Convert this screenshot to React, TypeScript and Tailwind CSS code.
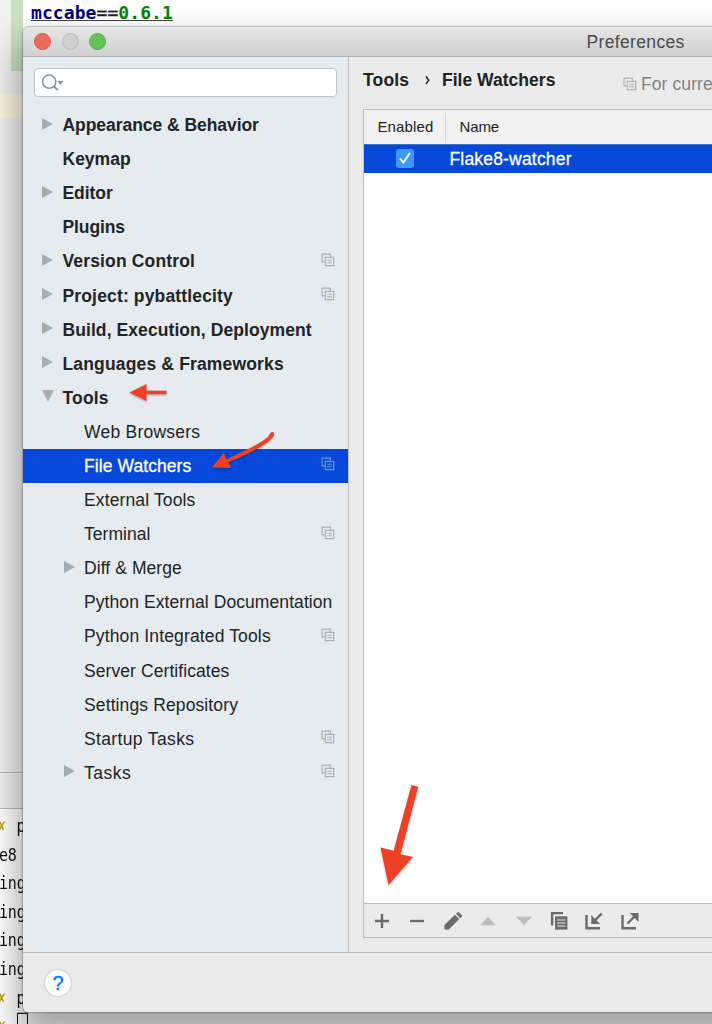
import React from "react";

type Item = {
  label: string;
  level: 0 | 1;
  arrow?: "right" | "down";
  copy?: boolean;
  selected?: boolean;
  tracking: string;
};

const items: Item[] = [
  { label: "Appearance & Behavior", level: 0, arrow: "right", tracking: "tracking-[-0.05px]" },
  { label: "Keymap", level: 0, tracking: "tracking-[0px]" },
  { label: "Editor", level: 0, arrow: "right", tracking: "tracking-[-0.05px]" },
  { label: "Plugins", level: 0, tracking: "tracking-[-0.1px]" },
  { label: "Version Control", level: 0, arrow: "right", copy: true, tracking: "tracking-[0.15px]" },
  { label: "Project: pybattlecity", level: 0, arrow: "right", copy: true, tracking: "tracking-[0.15px]" },
  { label: "Build, Execution, Deployment", level: 0, arrow: "right", tracking: "tracking-[0.08px]" },
  { label: "Languages & Frameworks", level: 0, arrow: "right", tracking: "tracking-[0.16px]" },
  { label: "Tools", level: 0, arrow: "down", tracking: "tracking-[0.15px]" },
  { label: "Web Browsers", level: 1, tracking: "tracking-[0.24px]" },
  { label: "File Watchers", level: 1, copy: true, selected: true, tracking: "tracking-[0.08px]" },
  { label: "External Tools", level: 1, tracking: "tracking-[0.13px]" },
  { label: "Terminal", level: 1, copy: true, tracking: "tracking-[0.05px]" },
  { label: "Diff & Merge", level: 1, arrow: "right", tracking: "tracking-[0.08px]" },
  { label: "Python External Documentation", level: 1, tracking: "tracking-[0.08px]" },
  { label: "Python Integrated Tools", level: 1, copy: true, tracking: "tracking-[0.14px]" },
  { label: "Server Certificates", level: 1, tracking: "tracking-[0.08px]" },
  { label: "Settings Repository", level: 1, tracking: "tracking-[0.12px]" },
  { label: "Startup Tasks", level: 1, copy: true, tracking: "tracking-[0.36px]" },
  { label: "Tasks", level: 1, arrow: "right", copy: true, tracking: "tracking-[0.5px]" },
];

function CopyIcon({ className }: { className: string }) {
  return (
    <svg width="14" height="14" viewBox="0 0 14 14" fill="none" stroke="currentColor" strokeWidth="1.2" className={className}>
      <path d="M3.8 8.900H1.100V1.100H9.400V3.700" />
      <path d="M4.300 4.300h8.400v8.400H4.300z" />
      <path d="M6.300 7.200h4.600M6.300 9.800h4.600" strokeWidth="1.1" />
    </svg>
  );
}

function Disclosure({ dir }: { dir?: "right" | "down" }) {
  return (
    <svg width="14" height="14" viewBox="0 0 14 14" fill="#a9abac" className="-mt-[3px] shrink-0">
      {dir === "right" && <path d="M1 1l11 6-11 6z" />}
      {dir === "down" && <path d="M1 1h12l-6 11.5z" />}
    </svg>
  );
}

function TreeRow({ item }: { item: Item }) {
  return (
    <div
      className={
        "flex h-[34.1px] shrink-0 items-center pr-[13px] " +
        (item.level === 0 ? "pl-[18px] font-bold " : "pl-[40px] ") +
        (item.selected ? "bg-[#0649da] text-white" : "text-[#222426]")
      }
    >
      <Disclosure dir={item.arrow} />
      <span
        className={
          "flex-1 whitespace-nowrap pt-px text-[17.5px] leading-[33px] " +
          (item.level === 0 ? "pl-[7.5px] " : "pl-[7px] ") +
          (item.selected ? "[-webkit-text-stroke:0.3px_white] " : "") +
          item.tracking
        }
      >
        {item.label}
      </span>
      {item.copy && (
        <CopyIcon className={"-mt-[3px] shrink-0 " + (item.selected ? "text-[#6f93cd]" : "text-[#a6b0ba]")} />
      )}
    </div>
  );
}

function Backdrop() {
  return (
    <div className="flex h-full w-full flex-col bg-white">
      <div className="flex h-[772px] shrink-0">
        <div className="w-[11px] shrink-0 bg-[#f1f1f1]">
          <div className="mt-[94px] h-[23px] bg-[#fdf6e0]" />
        </div>
        <div className="w-[12px] shrink-0 bg-[#f1f1f1]">
          <div className="h-[71px] bg-[#c9e2c0]" />
          <div className="mt-[23px] h-[23px] bg-[#fdf6e0]" />
        </div>
        <div className="h-[26px] whitespace-pre pl-[8px] font-['DejaVu_Sans_Mono',monospace] text-[18px] font-bold leading-[25px]">
          <span className="inline-block h-[21px] border-b border-[#444] tracking-[0.08px]">
            <span className="text-[#000080]">mccabe</span>
            <span className="font-normal text-[#222] [-webkit-text-stroke:0.3px_#222]">==</span>
            <span className="text-[#048404]">0.6.1</span>
          </span>
        </div>
      </div>
      <div className="h-[37px] shrink-0 border-y border-[#bcbcbc] bg-[#f1f1f1]" />
      <div className="flex flex-col pt-[3px] font-['DejaVu_Sans_Mono',monospace] text-[15px] text-[#111]">
        {["x p", "e8", "ing", "ing", "ing", "ing", "x p", "x "].map((line, i) => (
          <div key={i} className="flex h-[28.6px] origin-center scale-y-[1.2] items-center whitespace-pre">
            {line[0] === "x" ? (
              <>
                <span className="-ml-[3px] w-[19.5px] font-bold text-[#bfa015]">✗</span>
                {i < 7 ? line[2] : <span className="-mt-[3px] h-[20px] w-[11px] border-[1.5px] border-[#111]" />}
              </>
            ) : (
              <span className="-ml-[1px] tracking-[-0.2px]">{line}</span>
            )}
          </div>
        ))}
      </div>
    </div>
  );
}

function ToolbarIcons() {
  return (
    <div className="flex h-[35px] shrink-0 items-center gap-[15.4px] border-y border-[#bcbcbc] bg-[#ebebeb] pl-[8px] text-[#6b6b6b]">
      <svg width="20" height="20" viewBox="0 0 20 20" fill="none" stroke="currentColor" strokeWidth="2.4">
        <path d="M3 10h14M10 3v14" />
      </svg>
      <svg width="20" height="20" viewBox="0 0 20 20" fill="none" stroke="currentColor" strokeWidth="2.4">
        <path d="M3 10h14" />
      </svg>
      <svg width="20" height="20" viewBox="0 0 20 20" fill="currentColor">
        <path d="M1.4 18.6V14L11.9 3.8l4.3 4.3L5.8 18.6zM13 2.8l1.2-1.2q1-.9 2 0l2.4 2.3q.9 1 0 2l-1.3 1.3z" />
      </svg>
      <svg width="20" height="20" viewBox="0 0 20 20" fill="#bdbdbd">
        <path d="M2 14.3L10 6l8 8.300z" />
      </svg>
      <svg width="20" height="20" viewBox="0 0 20 20" fill="#bdbdbd">
        <path d="M2 5.700h16l-8 8.300z" />
      </svg>
      <svg width="20" height="20" viewBox="0 0 20 20" fill="none" stroke="currentColor">
        <path d="M3.1 14.500V2.100H14" strokeWidth="2.400" />
        <path d="M6 5.300h12.400v13.300H6z" fill="currentColor" stroke="none" />
        <path d="M8 9h8.400M8 12h8.400M8 15h8.400" stroke="#ebebeb" strokeWidth="1.200" />
      </svg>
      <svg width="20" height="20" viewBox="0 0 20 20" fill="none" stroke="currentColor" strokeWidth="2.400">
        <path d="M2.500 4v13.300H16" />
        <path d="M17.800 2.500l-8 8" />
        <path d="M7.300 4.200v8.900h8.900z" fill="currentColor" stroke="none" />
      </svg>
      <svg width="20" height="20" viewBox="0 0 20 20" fill="none" stroke="currentColor" strokeWidth="2.400">
        <path d="M2.500 4v13.300H16" />
        <path d="M7.500 12.500l8-8" />
        <path d="M9.600 2h8.900v8.900z" fill="currentColor" stroke="none" />
      </svg>
    </div>
  );
}

function Annotations() {
  return (
    <svg
      width="712"
      height="1024"
      viewBox="0 0 712 1024"
      className="pointer-events-none absolute left-0 top-0 drop-shadow-[0_1px_1px_rgba(0,0,0,0.3)]"
      fill="#ee4026"
    >
      <path d="M129.500 392.500L146.500 384v6.800h20v3.500h-20v6.700z" />
      <path d="M212 467.500l11.500-14.500 3.200 6.300c16-8 32-14.500 41.500-22.500 2-1.800 1.500-4.300 4-4.800 2.500 0 2.300 3 1 4.800-8 9.500-26 17.500-45 25.500l3.200 5.700z" />
      <path d="M411.500 785l6.700 1.800-17.700 67.500 12.500 2.700-24.500 28L380.500 847.500l13.200 3.200z" />
    </svg>
  );
}

export default function App() {
  return (
    <div className="relative h-[1024px] w-[712px] overflow-hidden font-['Liberation_Sans',Arial,sans-serif]">
      <Backdrop />

      <div className="absolute left-[23px] top-[27px] flex h-[985px] w-[1225px] flex-col overflow-hidden rounded-[6px] bg-[#ebebeb] shadow-[0_0_1px_1px_rgba(0,0,0,0.22),0_20px_34px_4px_rgba(0,0,0,0.38)]">
        <div className="flex h-[30px] shrink-0 items-center border-b border-[#b1b1b1] bg-linear-to-b from-[#e6e6e6] to-[#d0d0d0] pl-[11px]">
          <div className="flex gap-[10.500px]">
            <span className="h-[17px] w-[17px] rounded-full border border-[#d9574d] bg-[#ed6a5e]" />
            <span className="h-[17px] w-[17px] rounded-full border border-[#b9b9b9] bg-[#cfcfcf]" />
            <span className="h-[17px] w-[17px] rounded-full border border-[#54ae48] bg-[#61c554]" />
          </div>
          <span className="pl-[480.500px] pt-[2px] text-[17.500px] tracking-[0.350px] text-[#4b4b4b]">Preferences</span>
        </div>

        <div className="flex h-[895px] shrink-0">
          <aside className="flex w-[326px] shrink-0 flex-col border-r border-[#bcbcbc] bg-[#e5ebef]">
            <div className="ml-[11px] mt-[11px] flex h-[29px] w-[303px] shrink-0 items-center rounded-[4px] border border-[#c1c5c8] bg-white pl-[6px]">
              <svg width="24" height="20" viewBox="0 0 24 20" fill="none" stroke="#87939a" strokeWidth="1.500">
                <circle cx="8.200" cy="8.700" r="6.600" />
                <path d="M13 13.500l3.700 3.500" strokeWidth="2.200" />
                <path d="M16.500 8h6l-3 4z" fill="#87939a" stroke="none" />
              </svg>
            </div>
            <div className="flex flex-col pt-[11px]">
              {items.map((item) => (
                <TreeRow key={item.label} item={item} />
              ))}
            </div>
          </aside>

          <main className="flex flex-1 flex-col pb-[14px] pl-[14px]">
            <div className="flex h-[52px] shrink-0 whitespace-nowrap text-[17.500px] text-[#222]">
              <span className="w-[62px] pt-[10px] font-bold tracking-[0.150px]">Tools</span>
              <svg width="17" height="46" viewBox="0 0 17 46" fill="none" stroke="#222" strokeWidth="1.500">
                <path d="M1 19.500l2.700 3.800-2.700 3.800" />
              </svg>
              <span className="w-[181px] pt-[10px] font-bold tracking-[0.020px]">File Watchers</span>
              <CopyIcon className="mt-[20px] text-[#adb4ba]" />
              <span className="pl-[4px] pt-[14px] tracking-[0.100px] text-[#838383]">For current project</span>
            </div>
            <div className="flex flex-1 flex-col border-l border-[#bcbcbc] bg-white">
              <div className="flex h-[35px] shrink-0 items-center border-t border-[#bcbcbc] bg-[#f1f1f1] pt-px text-[15px] text-[#222]">
                <span className="flex h-[30px] w-[82px] items-center border-r border-[#d3d3d3] pl-[13.500px] tracking-[0.120px]">Enabled</span>
                <span className="pl-[13.500px] tracking-[-0.100px]">Name</span>
              </div>
              <div className="flex h-[29px] shrink-0 items-center border-t border-[#3f70c9] bg-[#0649da]">
                <span className="ml-[32px] flex h-[19px] w-[18px] -translate-y-px items-center justify-center rounded-[3px] bg-[#3b99fc]">
                  <svg width="14" height="14" viewBox="0 0 14 14" fill="none" stroke="white" strokeWidth="2">
                    <path d="M2 7.500l3.200 4L12 2" />
                  </svg>
                </span>
                <span className="pl-[35.500px] text-[17.500px] tracking-[0.180px] text-white [-webkit-text-stroke:0.3px_white]">Flake8-watcher</span>
              </div>
              <div className="flex-1" />
              <ToolbarIcons />
            </div>
          </main>
        </div>

        <footer className="flex flex-1 items-center border-t border-[#bcbcbc] bg-[#ebebeb] pl-[22px]">
          <span className="flex h-[26px] w-[26px] items-center justify-center rounded-full bg-white text-[20px] text-[#0a7cff] shadow-[0_0_2px_rgba(0,0,0,0.35)] [-webkit-text-stroke:0.4px_#0a7cff]">
            ?
          </span>
        </footer>
      </div>

      <Annotations />
    </div>
  );
}
